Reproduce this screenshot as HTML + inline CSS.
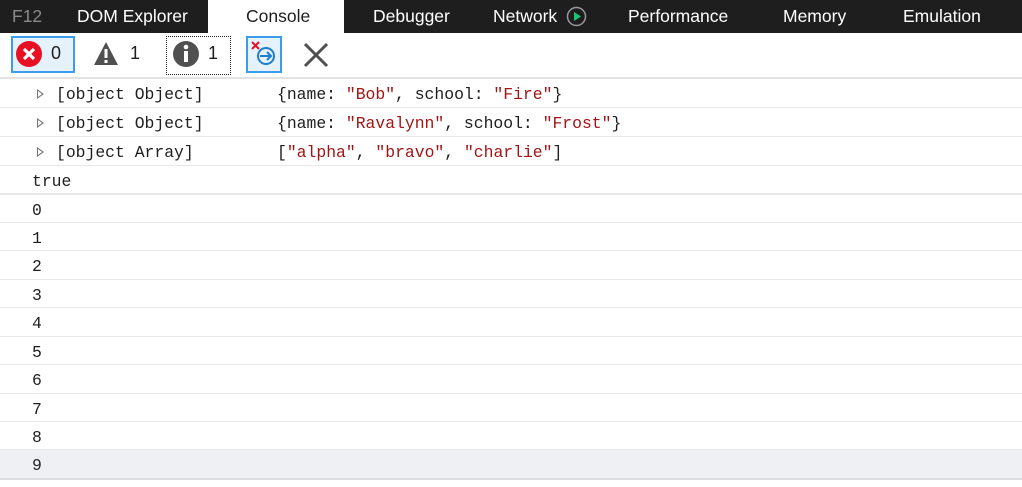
<!DOCTYPE html>
<html><head><style>
body{margin:0;width:1022px;height:487px;background:#fff;overflow:hidden;font-family:"Liberation Sans",sans-serif;position:relative}
.tabs{position:absolute;left:0;top:0;width:1022px;height:33px;background:#1e1e1e}
.tab{position:absolute;top:6px;font-size:17.5px;color:#fff}
.con{position:absolute;left:208px;top:0;width:136px;height:33px;background:#fff}
.tb{position:absolute;top:33px;left:0;width:1022px;height:44px}
.sep{position:absolute;top:77px;left:0;width:1022px;height:2px;background:#e3e3e3}
.row{position:absolute;left:0;width:1022px;border-bottom:1px solid #e8e8e8;font-family:"Liberation Mono",monospace;font-size:16.4px;color:#1e1e1e}
.row span{position:absolute;top:6px;white-space:pre}
.s{color:#a31515;font-weight:normal}
.tri{position:absolute;left:37px;top:10px;width:0;height:0;border-left:7px solid #777;border-top:5px solid transparent;border-bottom:5px solid transparent}
.tri:after{content:"";position:absolute;left:-6px;top:-3px;border-left:4px solid #fff;border-top:3px solid transparent;border-bottom:3px solid transparent}
.n{position:absolute;top:10px;font-size:18px;color:#1e1e1e}
</style></head><body>
<div class="tabs">
<span class="tab" style="left:12px;color:#8a8a8a">F12</span>
<span class="tab" style="left:77px">DOM Explorer</span>
<div class="con"></div>
<span class="tab" style="left:246px;color:#1e1e1e">Console</span>
<span class="tab" style="left:373px">Debugger</span>
<span class="tab" style="left:493px">Network</span>
<svg style="position:absolute;left:566px;top:6px" width="21" height="21"><circle cx="10.5" cy="10.5" r="9" fill="none" stroke="#999" stroke-width="1.5"/><path d="M8 6 L15 10.5 L8 15Z" fill="#1ec27a"/></svg>
<span class="tab" style="left:628px">Performance</span>
<span class="tab" style="left:783px">Memory</span>
<span class="tab" style="left:903px">Emulation</span>
</div>
<div class="tb">
<div style="position:absolute;left:11px;top:3px;width:60px;height:33px;border:2px solid #3c9dee;background:#e5f1fb"></div>
<svg style="position:absolute;left:15px;top:7px" width="28" height="28"><circle cx="14" cy="14" r="13" fill="#e81123"/><path d="M9 9L19 19M19 9L9 19" stroke="#fff" stroke-width="3.2"/></svg>
<span class="n" style="left:51px">0</span>
<svg style="position:absolute;left:93px;top:8px" width="26" height="25"><path d="M13 1L25 24H1Z" fill="#505050"/><rect x="11.5" y="8" width="3" height="9" fill="#fff"/><rect x="11.5" y="19" width="3" height="3" fill="#fff"/></svg>
<span class="n" style="left:130px">1</span>
<div style="position:absolute;left:166px;top:3px;width:63px;height:37px;border:1px dotted #222"></div>
<svg style="position:absolute;left:172px;top:7px" width="28" height="28"><circle cx="14" cy="14" r="13" fill="#505050"/><rect x="12" y="11" width="4" height="11" fill="#fff"/><circle cx="14" cy="7" r="2.3" fill="#fff"/></svg>
<span class="n" style="left:208px">1</span>
<div style="position:absolute;left:246px;top:3px;width:32px;height:33px;border:2px solid #3c9dee;background:#e5f1fb"></div>
<svg style="position:absolute;left:250px;top:7px" width="28" height="28"><path d="M2 2L9 9M9 2L2 9" stroke="#e81123" stroke-width="2"/><circle cx="16" cy="16" r="8" fill="none" stroke="#1e7fd0" stroke-width="2"/><path d="M10 16H21M17 12L21 16L17 20" stroke="#1e7fd0" stroke-width="2" fill="none"/></svg>
<svg style="position:absolute;left:303px;top:9px" width="26" height="26"><path d="M2 2L24 24M24 2L2 24" stroke="#505050" stroke-width="3"/></svg>
</div>
<div class="sep"></div>
<div class="row" style="top:79px;height:28px"><div class="tri"></div><span style="left:56px">[object Object]</span><span style="left:277px">{name: <b class="s">"Bob"</b>, school: <b class="s">"Fire"</b>}</span></div>
<div class="row" style="top:108px;height:28px"><div class="tri"></div><span style="left:56px">[object Object]</span><span style="left:277px">{name: <b class="s">"Ravalynn"</b>, school: <b class="s">"Frost"</b>}</span></div>
<div class="row" style="top:137px;height:28px"><div class="tri"></div><span style="left:56px">[object Array]</span><span style="left:277px">[<b class="s">"alpha"</b>, <b class="s">"bravo"</b>, <b class="s">"charlie"</b>]</span></div>
<div class="row" style="top:166px;height:27px;border-bottom:2px solid #e8e8e8"><span style="left:32px">true</span></div>
<div class="row" style="top:195px;height:27px"><span style="left:32px">0</span></div>
<div class="row" style="top:223px;height:27px"><span style="left:32px">1</span></div>
<div class="row" style="top:251px;height:28px"><span style="left:32px">2</span></div>
<div class="row" style="top:280px;height:27px"><span style="left:32px">3</span></div>
<div class="row" style="top:308px;height:28px"><span style="left:32px">4</span></div>
<div class="row" style="top:337px;height:27px"><span style="left:32px">5</span></div>
<div class="row" style="top:365px;height:28px"><span style="left:32px">6</span></div>
<div class="row" style="top:394px;height:27px"><span style="left:32px">7</span></div>
<div class="row" style="top:422px;height:27px"><span style="left:32px">8</span></div>
<div class="row" style="top:450px;height:28px;background:#eef0f4;border-bottom:2px solid #dcdde2"><span style="left:32px">9</span></div>
</body></html>
